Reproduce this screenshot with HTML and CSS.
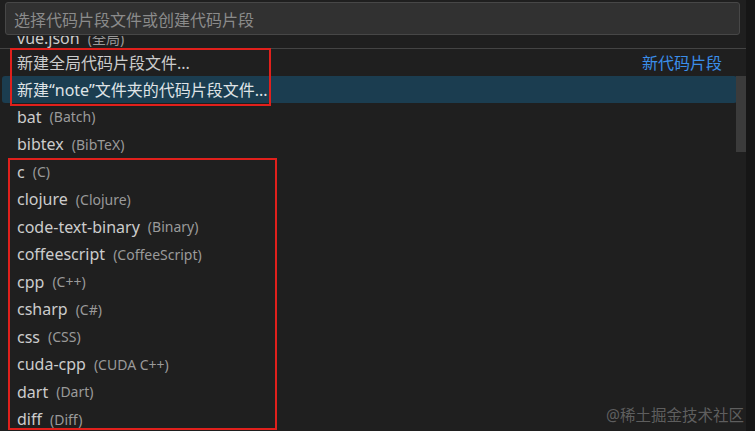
FILE: index.html
```html
<!DOCTYPE html>
<html lang="zh-CN">
<head>
<meta charset="utf-8">
<title>Snippets</title>
<link rel="stylesheet" href="styles.css">
</head>
<body>
<div class="panel">
  <div class="input">选择代码片段文件或创建代码片段</div>
  <div class="list">
    <div class="scroller">
      <div class="row partial"><span class="label">vue.json</span><span class="desc">(全局)</span></div>
      <div class="row sep"><span class="label">新建全局代码片段文件...</span><span class="group">新代码片段</span></div>
      <div class="row active"><span class="label">新建“note”文件夹的代码片段文件...</span></div>
      <div class="row"><span class="label">bat</span><span class="desc">(Batch)</span></div>
      <div class="row"><span class="label">bibtex</span><span class="desc">(BibTeX)</span></div>
      <div class="row"><span class="label">c</span><span class="desc">(C)</span></div>
      <div class="row"><span class="label">clojure</span><span class="desc">(Clojure)</span></div>
      <div class="row"><span class="label">code-text-binary</span><span class="desc">(Binary)</span></div>
      <div class="row"><span class="label">coffeescript</span><span class="desc">(CoffeeScript)</span></div>
      <div class="row"><span class="label">cpp</span><span class="desc">(C++)</span></div>
      <div class="row"><span class="label">csharp</span><span class="desc">(C#)</span></div>
      <div class="row"><span class="label">css</span><span class="desc">(CSS)</span></div>
      <div class="row"><span class="label">cuda-cpp</span><span class="desc">(CUDA C++)</span></div>
      <div class="row"><span class="label">dart</span><span class="desc">(Dart)</span></div>
      <div class="row"><span class="label">diff</span><span class="desc">(Diff)</span></div>
    </div>
  </div>
  <div class="scrollbar"></div>
  <div class="mark mark-top"></div>
  <div class="mark mark-bottom"></div>
  <div class="watermark">@稀土掘金技术社区</div>
</div>
</body>
</html>
```

FILE: styles.css
```css
html, body {
  margin: 0;
  padding: 0;
  background: #161616;
}
body {
  width: 755px;
  height: 431px;
  overflow: hidden;
  font-family: "Noto Sans", "Noto Sans CJK SC", sans-serif;
}
.panel {
  position: relative;
  width: 746px;
  height: 431px;
  background: #1f1f1f;
  overflow: hidden;
}
.input {
  box-sizing: border-box;
  margin: 2px 6px 0 5px;
  height: 33px;
  background: #313131;
  border: 1px solid #474747;
  border-radius: 3px;
  padding-left: 8px;
  display: flex;
  align-items: center;
  font-size: 16px;
  color: #8b8b8b;
}
.list {
  display: flow-root;
  margin-top: 1px;
  height: 395px;
  overflow: hidden;
}
.scroller {
  margin-top: -15.5px;
  padding: 0 9px 0 2px;
}
.row {
  height: 27.5px;
  box-sizing: border-box;
  display: flex;
  align-items: center;
  padding: 0 15px;
  font-size: 16px;
  color: #cccccc;
  white-space: nowrap;
  border-radius: 3px;
}
.row.partial {
  padding-top: 8px;
}
.row.sep {
  border-top: 1px solid #444444;
  border-radius: 0;
  margin: 0 -9px 0 -2px;
  padding: 0 24px 0 17px;
}
.row.active {
  background: #1b3d50;
  color: #dfe3e6;
}
.desc {
  margin-left: 8px;
  font-size: 14px;
  color: #9a9a9a;
}
.group {
  margin-left: auto;
  font-size: 16px;
  color: #3b8eea;
}
.scrollbar {
  position: absolute;
  left: 736px;
  top: 76px;
  width: 10px;
  height: 76px;
  background: #3b3b3b;
}
.mark {
  position: absolute;
  border: 2px solid #e0201c;
  box-sizing: border-box;
}
.mark-top {
  left: 10px;
  top: 48px;
  width: 261px;
  height: 58px;
}
.mark-bottom {
  left: 8px;
  top: 158px;
  width: 269px;
  height: 272px;
}
.watermark {
  position: absolute;
  right: 2px;
  bottom: 5px;
  font-size: 15.5px;
  color: rgba(150, 150, 150, 0.55);
}
```
